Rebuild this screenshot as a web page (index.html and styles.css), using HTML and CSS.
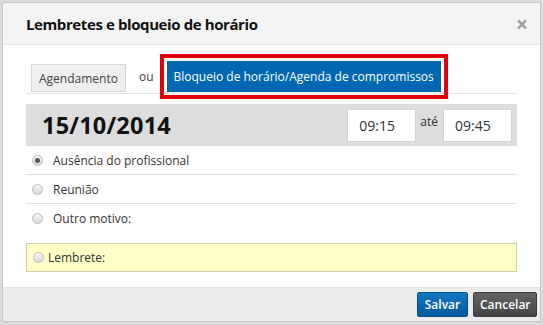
FILE: index.html
```html
<!DOCTYPE html>
<html lang="pt-BR">
<head>
    <meta charset="UTF-8">
    <meta name="viewport" content="width=device-width, initial-scale=1.0">
    <title>Lembretes e bloqueio de horário</title>
    <link rel="stylesheet" href="styles.css">
</head>
<body>

<div class="modal">
    <div class="modal-header">
        <h3>Lembretes e bloqueio de horário</h3>
        <span class="close">&times;</span>
    </div>
    <div class="modal-body">
        <div class="tabs">
            <button type="button" class="tab">Agendamento</button>
            <span class="tab-or">ou</span>
            <button type="button" class="tab tab-active">Bloqueio de horário/Agenda de compromissos</button>
        </div>
        <div class="date-bar">
            <span class="date">15/10/2014</span>
            <div class="times">
                <input type="text" class="time" value="09:15">
                <span class="ate">até</span>
                <input type="text" class="time" value="09:45">
            </div>
        </div>
        <ul class="reasons">
            <li><span class="radio checked"></span>Ausência do profissional</li>
            <li><span class="radio"></span>Reunião</li>
            <li><span class="radio"></span>Outro motivo:</li>
        </ul>
        <div class="reminder">
            <span class="radio"></span>Lembrete:
        </div>
    </div>
    <div class="modal-footer">
        <button type="button" class="btn btn-primary">Salvar</button>
        <button type="button" class="btn btn-dark">Cancelar</button>
    </div>
</div>

</body>
</html>
```

FILE: styles.css
```css
body {
    font-family: "Open Sans", "Noto Sans", sans-serif;
    background-color: #dcdcdc;
    margin: 0;
    padding: 2px;
}
.modal {
    width: 537px;
    height: 318px;
    background-color: #fff;
    border: 1px solid #c8c8c8;
    display: flex;
    flex-direction: column;
}
.modal-header {
    display: flex;
    justify-content: space-between;
    align-items: center;
    height: 41px;
    padding: 0 12px 0 23px;
    background-color: #f4f4f4;
    border-bottom: 1px solid #e6e6e6;
}
.modal-header h3 {
    margin: 0;
    font-size: 15px;
    font-weight: bold;
    letter-spacing: -0.4px;
    color: #111;
}
.close {
    font-size: 21px;
    font-weight: bold;
    color: #9a9a9a;
}
.modal-body {
    flex: 1;
    padding: 16px 23px 0;
}
.tabs {
    display: flex;
    align-items: flex-end;
    height: 32px;
    padding-left: 5px;
    border-bottom: 1px solid #e2e2e2;
}
.tab {
    font-family: inherit;
    font-size: 12px;
    height: 28px;
    padding: 0 7px;
    border: 1px solid #d6d6d6;
    background-color: #efefef;
    color: #444;
    margin-bottom: 1px;
}
.tab-or {
    font-size: 12px;
    color: #444;
    margin: 0 13px;
    padding-bottom: 8px;
}
.tab-active {
    height: 31px;
    padding: 0 6px;
    background-color: #0068b2;
    border-color: #0068b2;
    color: #fff;
    outline: 4px solid #e0000b;
    outline-offset: 3px;
}
.date-bar {
    display: flex;
    justify-content: space-between;
    align-items: center;
    height: 42px;
    margin-top: 10px;
    padding: 0 5px 0 16px;
    background-color: #dddddd;
}
.date {
    font-size: 23.5px;
    font-weight: bold;
    letter-spacing: 0.2px;
    color: #111;
}
.times {
    display: flex;
    align-items: center;
}
.time {
    font-family: inherit;
    width: 69px;
    height: 33px;
    box-sizing: border-box;
    padding: 0 0 0 11px;
    border: 1px solid #d4d4d4;
    font-size: 14px;
    color: #333;
}
.ate {
    font-size: 12px;
    color: #333;
    margin: 0 5px 8px 4px;
}
.reasons {
    list-style: none;
    margin: 0;
    padding: 0;
}
.reasons li {
    display: flex;
    align-items: center;
    height: 28px;
    font-size: 12px;
    color: #333;
    border-bottom: 1px solid #e0e0e0;
}
.reasons li:last-child {
    border-bottom: none;
}
.radio {
    width: 11px;
    height: 11px;
    box-sizing: border-box;
    border-radius: 50%;
    border: 1px solid #bbb;
    background: linear-gradient(#f6f6f6, #d8d8d8);
    margin: 0 10px 0 6px;
    display: flex;
    justify-content: center;
    align-items: center;
}
.radio.checked::after {
    content: "";
    width: 5px;
    height: 5px;
    border-radius: 50%;
    background-color: #555;
}
.reminder {
    display: flex;
    align-items: center;
    height: 27px;
    margin-top: 11px;
    background-color: #ffffc8;
    border: 1px solid #cfcfb0;
    font-size: 12px;
    color: #333;
}
.reminder .radio {
    margin: 0 4px 0 6px;
}
.modal-footer {
    display: flex;
    justify-content: flex-end;
    gap: 5px;
    height: 33px;
    padding: 0 3px 0 0;
    align-items: center;
    background-color: #ececec;
    border-top: 1px solid #e2e2e2;
}
.btn {
    font-family: inherit;
    font-size: 12px;
    font-weight: 600;
    height: 25px;
    padding: 0 6px;
    border-radius: 2px;
    color: #fff;
}
.btn-primary {
    width: 51px;
    background: linear-gradient(#1577c2, #005a9e);
    border: 1px solid #00508c;
}
.btn-dark {
    width: 64px;
    background: linear-gradient(#646464, #444);
    border: 1px solid #3a3a3a;
}
```
